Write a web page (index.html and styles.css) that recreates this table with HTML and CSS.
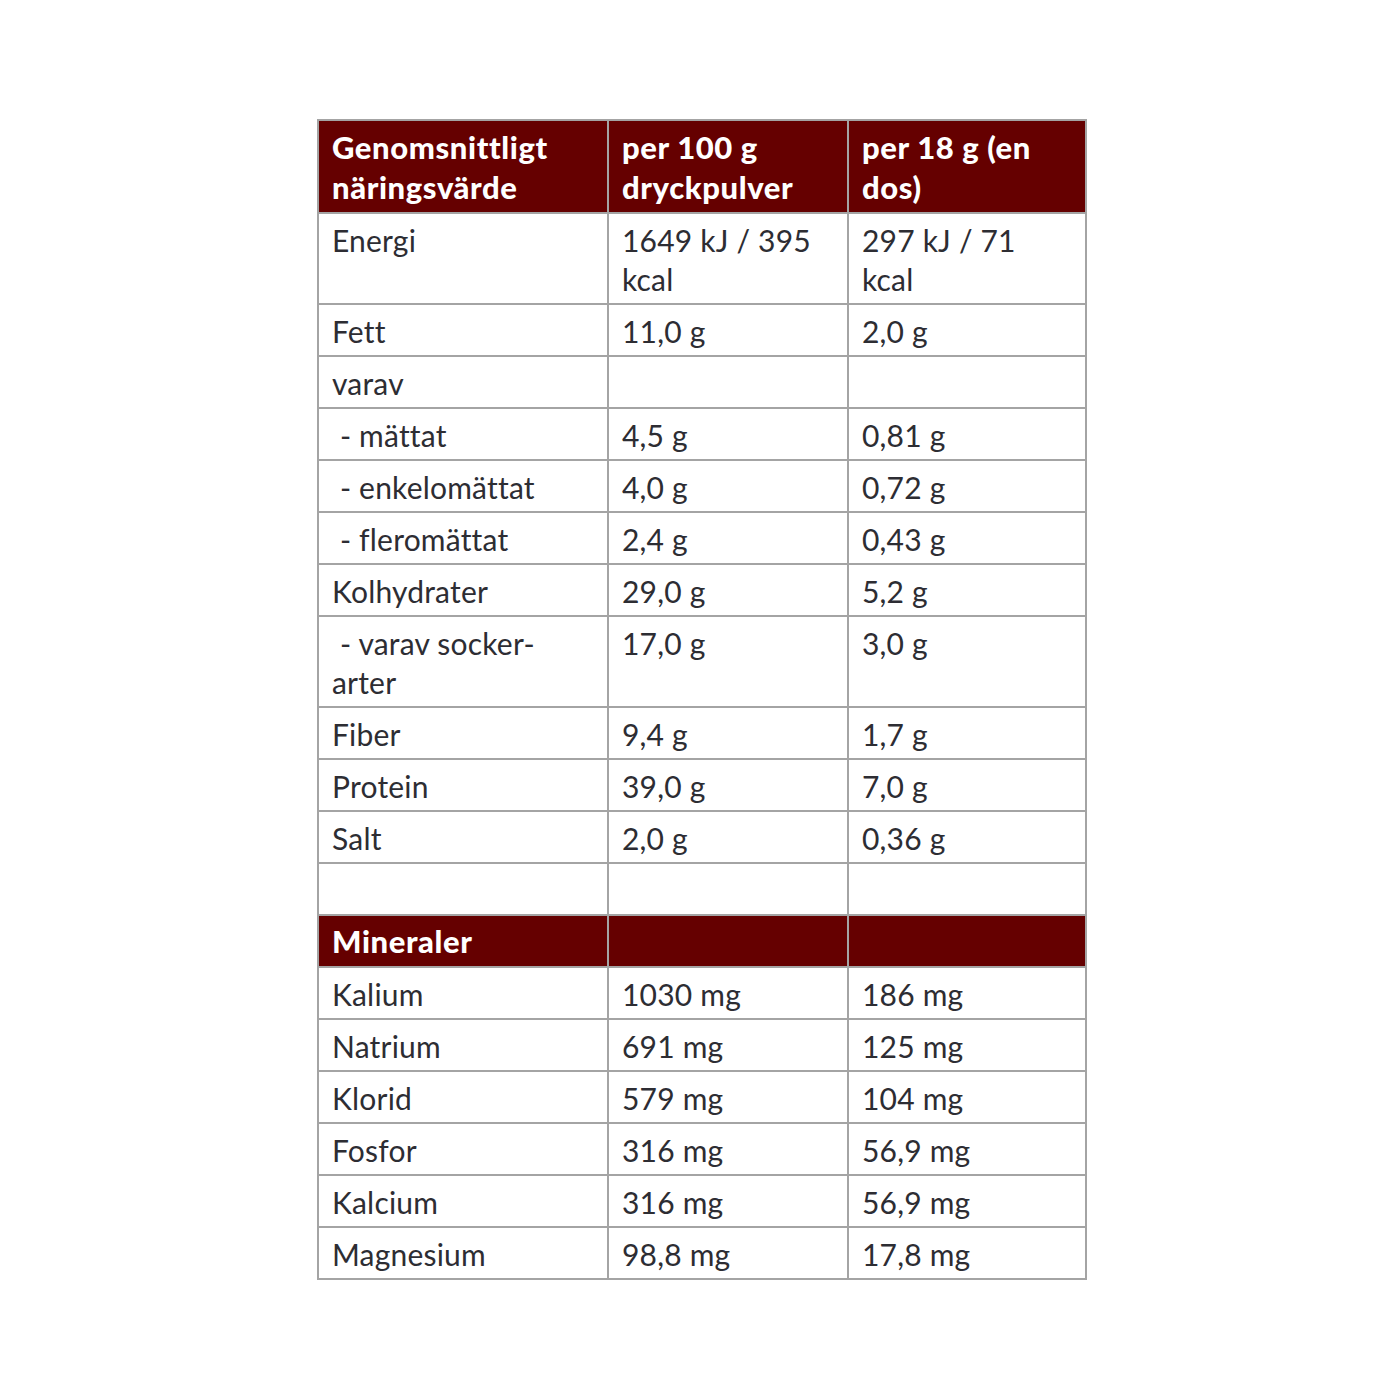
FILE: index.html
```html
<!DOCTYPE html>
<html lang="sv">
<head>
<meta charset="utf-8">
<title>Näringsvärde</title>
<link rel="stylesheet" href="styles.css">
</head>
<body>
<div class="page">
<table class="nutri">
  <colgroup><col class="c1"><col class="c2"><col class="c3"></colgroup>
  <tr class="head"><td>Genomsnittligt näringsvärde</td><td>per 100 g dryckpulver</td><td>per 18 g (en dos)</td></tr>
  <tr><td>Energi</td><td>1649 kJ / 395 kcal</td><td>297 kJ / 71 kcal</td></tr>
  <tr><td>Fett</td><td>11,0 g</td><td>2,0 g</td></tr>
  <tr><td>varav</td><td></td><td></td></tr>
  <tr><td>&nbsp;- mättat</td><td>4,5 g</td><td>0,81 g</td></tr>
  <tr><td>&nbsp;- enkelomättat</td><td>4,0 g</td><td>0,72 g</td></tr>
  <tr><td>&nbsp;- fleromättat</td><td>2,4 g</td><td>0,43 g</td></tr>
  <tr><td>Kolhydrater</td><td>29,0 g</td><td>5,2 g</td></tr>
  <tr><td>&nbsp;- varav socker-arter</td><td>17,0 g</td><td>3,0 g</td></tr>
  <tr><td>Fiber</td><td>9,4 g</td><td>1,7 g</td></tr>
  <tr><td>Protein</td><td>39,0 g</td><td>7,0 g</td></tr>
  <tr><td>Salt</td><td>2,0 g</td><td>0,36 g</td></tr>
  <tr><td>&nbsp;</td><td></td><td></td></tr>
  <tr class="head single"><td>Mineraler</td><td></td><td></td></tr>
  <tr><td>Kalium</td><td>1030 mg</td><td>186 mg</td></tr>
  <tr><td>Natrium</td><td>691 mg</td><td>125 mg</td></tr>
  <tr><td>Klorid</td><td>579 mg</td><td>104 mg</td></tr>
  <tr><td>Fosfor</td><td>316 mg</td><td>56,9 mg</td></tr>
  <tr><td>Kalcium</td><td>316 mg</td><td>56,9 mg</td></tr>
  <tr><td>Magnesium</td><td>98,8 mg</td><td>17,8 mg</td></tr>
</table>
</div>
</body>
</html>
```
FILE: styles.css
```css
html, body {
  margin: 0;
  padding: 0;
  background: #ffffff;
}
.page {
  padding: 119px 0 0 317px;
}
.nutri {
  border-collapse: collapse;
  width: 768px;
  table-layout: fixed;
  font-family: Lato, "Open Sans", sans-serif;
  font-size: 30px;
  letter-spacing: 0.2px;
  color: #2d2d33;
}
.c1 { width: 290px; }
.c2 { width: 240px; }
.c3 { width: 238px; }
.nutri td {
  border: 2px solid #a4a4a4;
  padding: 7px 12px 4px 13px;
  line-height: 39px;
  vertical-align: top;
  height: 39px;
}
.nutri tr.head td {
  background: #650000;
  color: #ffffff;
  font-weight: 900;
  font-size: 31px;
  letter-spacing: 0.6px;
  line-height: 40px;
  padding-top: 6px;
  padding-bottom: 5px;
}
.nutri tr.head.single td {
  line-height: 39px;
}
```
